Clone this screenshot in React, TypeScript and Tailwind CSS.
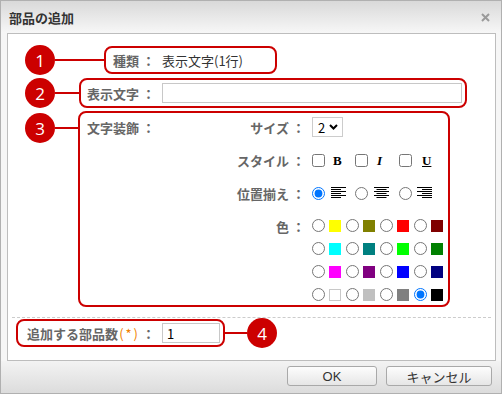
import React from "react";

const colorRows = [
  ["#ffff00", "#808000", "#ff0000", "#800000"],
  ["#00ffff", "#008080", "#00ff00", "#008000"],
  ["#ff00ff", "#800080", "#0000ff", "#000080"],
  ["#ffffff", "#c0c0c0", "#808080", "#000000"],
];

function Badge({ n }: { n: number }) {
  return (
    <div className="flex h-[30px] w-[30px] shrink-0 items-center justify-center rounded-full bg-[#cc0000] font-['Open_Sans',sans-serif] text-[17px] leading-none text-white">
      {n}
    </div>
  );
}

function Label({ text }: { text: string }) {
  return (
    <>
      <span className="font-bold text-[#666]">{text}</span>
      <span className="ml-[3px] font-bold text-[#666]">：</span>
    </>
  );
}

function AlignIcon({ mode }: { mode: "left" | "center" | "right" }) {
  const widths = [15, 10, 15, 10, 15, 10];
  return (
    <svg width="15" height="12" viewBox="0 0 15 12">
      {widths.map((w, i) => {
        const x = mode === "left" ? 0 : mode === "center" ? (15 - w) / 2 : 15 - w;
        return <rect key={i} x={x} y={i * 2} width={w} height="1" fill="#000" />;
      })}
    </svg>
  );
}

function FormRow({ label, children }: { label: string; children: React.ReactNode }) {
  return (
    <div className="flex items-center">
      <div className="flex h-[20px] w-[150px] items-center justify-end">
        <Label text={label} />
      </div>
      <div className="ml-[7px] flex items-center">{children}</div>
    </div>
  );
}

export default function App() {
  return (
    <div className="flex h-[394px] w-[502px] flex-col border border-[#b0b0b0] bg-[#f6f6f6] font-['Noto_Sans_CJK_JP',sans-serif] text-[13px] leading-none text-[#333]">
      {/* title bar */}
      <div className="flex h-[32px] shrink-0 items-center justify-between bg-linear-to-b from-[#d9d9d9] to-[#f7f7f7] pl-[8px] pr-[11px]">
        <span className="font-bold text-[#333]">部品の追加</span>
        <svg width="9" height="9" viewBox="0 0 9 9">
          <path d="M1 1l7 7M8 1l-7 7" stroke="#9a9a9a" strokeWidth="2" />
        </svg>
      </div>

      {/* body */}
      <div className="ml-[6px] w-[489px] border border-[#bdbdbd] bg-white pb-[12px] pt-[11px]">
        {/* 1 */}
        <div className="flex h-[30px] items-center pl-[17px]">
          <Badge n={1} />
          <div className="h-[2px] w-[49px] bg-[#cc0000]" />
          <div className="flex h-[28px] w-[173px] items-center rounded-[8px] border-2 border-[#cc0000]">
            <div className="flex w-[49px] justify-end">
              <Label text="種類" />
            </div>
            <span className="ml-[7px] text-[#333]">表示文字(1行)</span>
          </div>
        </div>

        {/* 2 */}
        <div className="mt-[3px] flex h-[30px] items-center pl-[17px]">
          <Badge n={2} />
          <div className="h-[2px] w-[24px] bg-[#cc0000]" />
          <div className="flex h-[30px] w-[388px] items-center rounded-[8px] border-2 border-[#cc0000]">
            <div className="flex w-[74px] justify-end">
              <Label text="表示文字" />
            </div>
            <input
              type="text"
              className="ml-[7px] h-[20px] w-[300px] border border-[#c8c8c8] bg-white px-[4px] outline-none"
            />
          </div>
        </div>

        {/* 3 */}
        <div className="mt-[3px] flex items-start pl-[17px]">
          <div className="mt-[2px] flex items-center">
            <Badge n={3} />
            <div className="h-[2px] w-[23px] bg-[#cc0000]" />
          </div>
          <div className="flex h-[196px] w-[372px] rounded-[8px] border-2 border-[#cc0000] pt-[4px]">
            <div className="flex h-[20px] w-[75px] items-center justify-end">
              <Label text="文字装飾" />
            </div>
            <div className="flex flex-col gap-[13px]">
              <FormRow label="サイズ">
                <div className="flex h-[20px] w-[31px] items-center border border-[#ccc] bg-white pl-[5px]">
                  <span className="text-[13px] text-black">2</span>
                  <svg className="ml-[4px]" width="9" height="6" viewBox="0 0 9 6">
                    <path d="M1 1l3.5 3.5L8 1" stroke="#000" strokeWidth="2" fill="none" />
                  </svg>
                </div>
              </FormRow>
              <FormRow label="スタイル">
                <div className="flex w-[43px] items-center">
                  <input type="checkbox" className="h-[13px] w-[13px]" />
                  <span className="ml-[8px] font-['Liberation_Serif',serif] text-[13px] font-bold text-black">B</span>
                </div>
                <div className="flex w-[44px] items-center">
                  <input type="checkbox" className="h-[13px] w-[13px]" />
                  <span className="ml-[9px] font-['Liberation_Serif',serif] text-[13px] font-bold italic text-black">I</span>
                </div>
                <div className="flex items-center">
                  <input type="checkbox" className="h-[13px] w-[13px]" />
                  <span className="ml-[10px] font-['Liberation_Serif',serif] text-[13px] font-bold text-black underline">U</span>
                </div>
              </FormRow>
              <FormRow label="位置揃え">
                <div className="flex w-[43px] items-center">
                  <input type="radio" name="align" defaultChecked className="h-[13px] w-[13px]" />
                  <span className="ml-[6px] flex">
                    <AlignIcon mode="left" />
                  </span>
                </div>
                <div className="flex w-[44px] items-center">
                  <input type="radio" name="align" className="h-[13px] w-[13px]" />
                  <span className="ml-[6px] flex">
                    <AlignIcon mode="center" />
                  </span>
                </div>
                <div className="flex items-center">
                  <input type="radio" name="align" className="h-[13px] w-[13px]" />
                  <span className="ml-[5px] flex">
                    <AlignIcon mode="right" />
                  </span>
                </div>
              </FormRow>
              <div className="flex items-start">
                <div className="flex h-[20px] w-[150px] items-center justify-end">
                  <Label text="色" />
                </div>
                <div className="ml-[7px] flex flex-col gap-[10px] pt-[3px]">
                  {colorRows.map((row, r) => (
                    <div key={r} className="flex h-[13px] items-center">
                      {row.map((c, i) => (
                        <div key={c} className="flex w-[34px] items-center">
                          <input
                            type="radio"
                            name="color"
                            defaultChecked={r === 3 && i === 3}
                            className="h-[13px] w-[13px]"
                          />
                          <span
                            className={
                              c === "#ffffff"
                                ? "ml-[4px] h-[12px] w-[12px] border border-[#c8c8c8] bg-white"
                                : "ml-[4px] h-[12px] w-[12px]"
                            }
                            style={c === "#ffffff" ? undefined : { backgroundColor: c }}
                          />
                        </div>
                      ))}
                    </div>
                  ))}
                </div>
              </div>
            </div>
          </div>
        </div>

        <div className="mx-[4px] mt-[10px] border-t border-dashed border-[#cccccc]" />

        {/* 4 */}
        <div className="flex h-[30px] items-center pl-[8px]">
          <div className="flex h-[28px] w-[209px] items-center rounded-[8px] border-2 border-[#cc0000]">
            <div className="flex w-[137px] justify-end">
              <span className="font-bold text-[#666]">追加する部品数</span>
              <span className="ml-[1px] tracking-[2px] text-[#f08000]">(*)</span>
              <span className="ml-[2px] font-bold text-[#666]">：</span>
            </div>
            <input
              type="text"
              defaultValue="1"
              className="ml-[7px] h-[20px] w-[58px] border border-[#c8c8c8] bg-white px-[4px] text-black outline-none"
            />
          </div>
          <div className="h-[2px] w-[22px] bg-[#cc0000]" />
          <Badge n={4} />
        </div>
      </div>

      {/* footer */}
      <div className="flex flex-1 justify-end gap-[9px] bg-linear-to-b from-[#f3f3f3] to-[#dcdcdc] pr-[9px] pt-[5px]">
        <button className="flex h-[20px] w-[90px] items-center justify-center rounded-[3px] border border-[#a9a9a9] bg-linear-to-b from-[#fdfdfd] to-[#e6e6e6] font-['Liberation_Sans',sans-serif] text-[13px] text-[#333]">
          OK
        </button>
        <button className="flex h-[20px] w-[106px] items-center justify-center rounded-[3px] border border-[#a9a9a9] bg-linear-to-b from-[#fdfdfd] to-[#e6e6e6] text-[13px] text-[#333]">
          キャンセル
        </button>
      </div>
    </div>
  );
}
